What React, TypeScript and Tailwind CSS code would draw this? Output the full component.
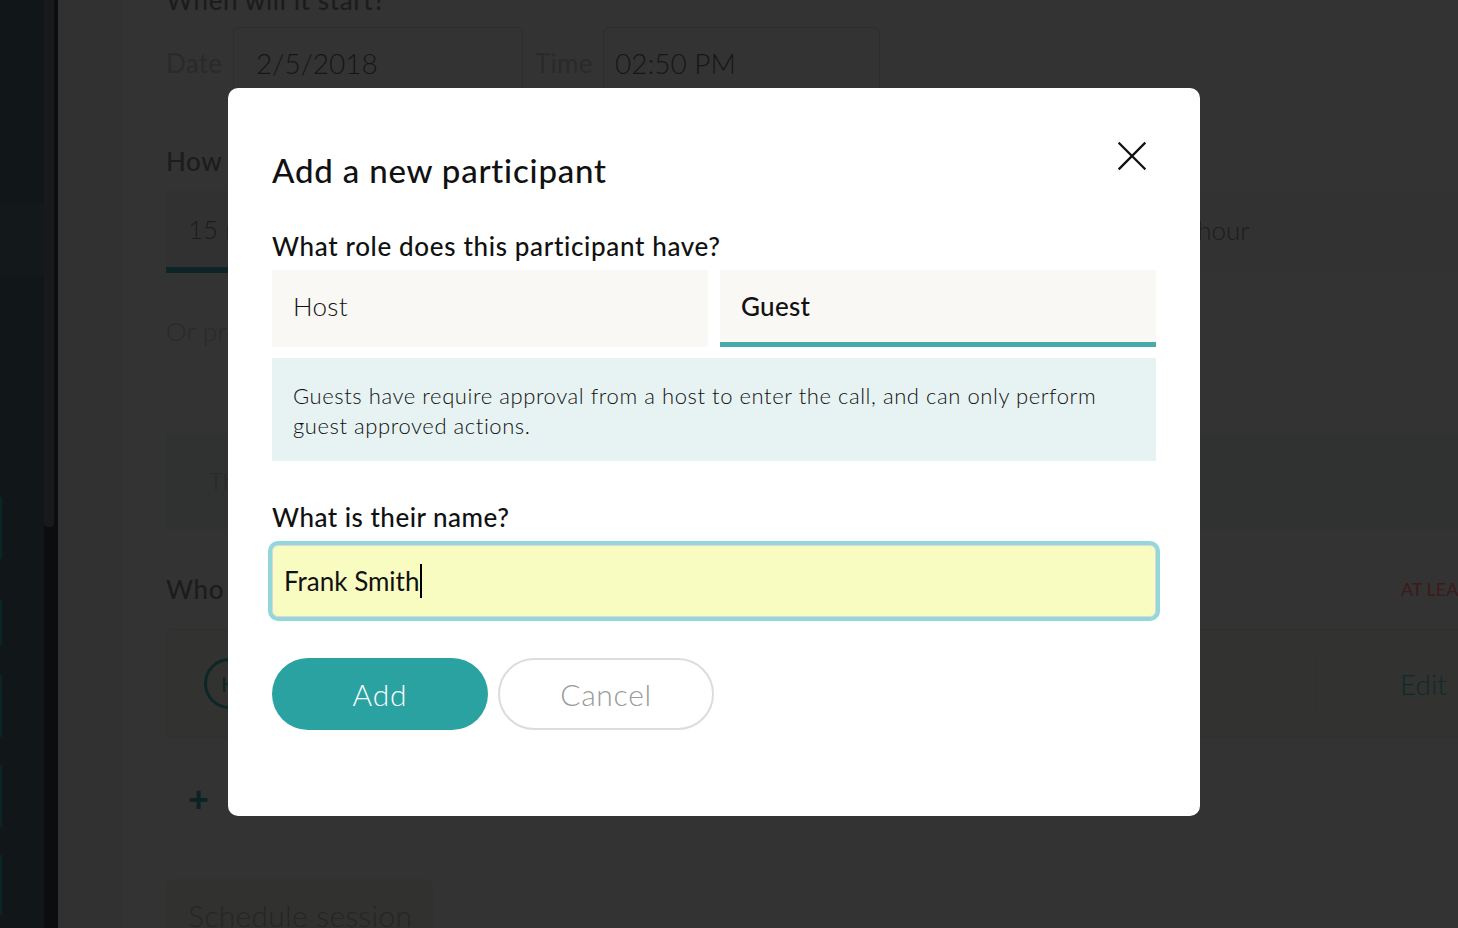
import React from "react";

function CloseIcon() {
  return (
    <svg width="30" height="30" viewBox="0 0 30 30" fill="none">
      <path d="M2.5 2.5 L27.5 27.5 M27.5 2.5 L2.5 27.5" stroke="#111" strokeWidth="2.3" strokeLinecap="square" />
    </svg>
  );
}

function Background() {
  return (
    <div className="flex h-[928px] w-[1458px] overflow-hidden bg-[#333333]">
      <div className="relative w-[44px] shrink-0 bg-[#111619]">
        <div className="mt-[203px] h-[72px] bg-[#13181b]" />
        <div className="absolute left-0 top-[497px] h-[62px] w-[2px] bg-[#0b2526]" />
        <div className="absolute left-0 top-[600px] h-[45px] w-[2px] bg-[#0b2526]" />
        <div className="absolute left-0 top-[675px] h-[62px] w-[2px] bg-[#0b2526]" />
        <div className="absolute left-0 top-[765px] h-[62px] w-[2px] bg-[#0b2526]" />
        <div className="absolute left-0 top-[855px] h-[60px] w-[2px] bg-[#0b2526]" />
      </div>
      <div className="w-[14px] shrink-0 bg-[#0c0d0e]">
        <div className="h-[527px] w-[10px] rounded-b-[4px] bg-[#18191a]" />
      </div>
      <div className="w-[64px] shrink-0 bg-[#313131]" />
      <div className="w-[1340px] shrink-0 pl-[44px] font-['Lato',sans-serif]">
        <div className="mt-[-16px] h-[32px] text-[26px] font-medium leading-[32px] tracking-[0.6px] text-[#1c1c1c]">When will it start?</div>
        <div className="mt-[11px] flex items-center">
          <span className="w-[67px] text-[26px] font-normal tracking-[0.3px] text-[#2a2a2a]">Date</span>
          <div className="flex h-[72px] w-[290px] items-center rounded-[6px] border border-[#2d2d2d] pl-[22px] text-[28px] font-light text-[#161616]">2/5/2018</div>
          <span className="ml-[12px] w-[68px] text-[26px] font-normal tracking-[0.3px] text-[#2a2a2a]">Time</span>
          <div className="flex h-[72px] w-[277px] items-center rounded-[6px] border border-[#2d2d2d] pl-[11px] text-[28px] font-light text-[#161616]">02:50 PM</div>
        </div>
        <div className="mt-[46px] h-[32px] text-[26px] font-medium leading-[32px] tracking-[0.6px] text-[#1c1c1c]">How long will it last?</div>
        <div className="mt-[14px] grid w-[1304px] grid-cols-4 gap-[12px]">
          {["15 minutes", "30 minutes", "45 minutes", "1 hour"].map((t, i) => (
            <div
              key={t}
              className={
                "flex h-[82px] items-center pl-[22px] text-[26px] font-light text-[#1c1c1c] " +
                (i === 0 ? "border-b-[6px] border-[#0d2526] bg-[#313131]" : "bg-[#323232] pb-[4px]")
              }
            >
              {t}
            </div>
          ))}
        </div>
        <div className="mt-[42px] text-[26px] font-light leading-[32px] tracking-[0.3px] text-[#2a2a2a]">Or propose a custom duration</div>
        <div className="mt-[86px] flex h-[96px] w-[1304px] items-center bg-[#303131] pl-[43px] text-[24px] font-light text-[#282828]">
          The session will be scheduled in your local time zone.
        </div>
        <div className="mt-[44px] flex w-[1292px] items-center justify-between">
          <span className="text-[26px] font-medium leading-[32px] tracking-[0.6px] text-[#1c1c1c]">Who will join?</span>
          <span className="w-[57px] overflow-hidden whitespace-nowrap text-[18px] text-[#3d1a1b]">AT LEAST ONE HOST</span>
        </div>
        <div className="mt-[24px] flex h-[109px] w-[1304px] items-center justify-between rounded-[6px] border border-[#2f2f2f] bg-[#323231] pl-[37px]">
          <div className="flex h-[51px] w-[51px] items-center justify-center rounded-full border-[3px] border-[#0d2627] text-[22px] text-[#0d2627]">H</div>
          <div className="mr-[-12px] flex h-[65px] w-[166px] items-center rounded-[6px] border border-[#303030] pl-[84px] text-[28px] font-light text-[#0f2a2b]">Edit</div>
        </div>
        <div className="mt-[42px] ml-[22px] text-[36px] font-black leading-[36px] text-[#0b2324]">+</div>
        <div className="mt-[63px] flex h-[72px] w-[267px] items-center rounded-[8px] bg-[#313130] pl-[22px] text-[30px] font-light tracking-[0.3px] text-[#262626]">
          Schedule session
        </div>
      </div>
    </div>
  );
}

export default function App() {
  return (
    <div className="relative h-[928px] w-[1458px] overflow-hidden">
      <Background />
      <div className="absolute left-[228px] top-[88px] h-[728px] w-[972px] rounded-[10px] bg-white px-[44px] pt-[62px] font-['Lato',sans-serif] text-[#111]">
        <div className="absolute right-[53px] top-[53px]">
          <CloseIcon />
        </div>
        <div className="h-[40px] text-[33px] font-medium leading-[40px] tracking-[0.8px] text-[#111]">Add a new participant</div>
        <div className="mt-[40px] h-[32px] text-[26px] font-medium leading-[32px] tracking-[0.65px]">What role does this participant have?</div>
        <div className="mt-[8px] flex gap-[12px]">
          <div className="flex h-[77px] w-[436px] items-center bg-[#f9f8f5] pb-[4px] pl-[21px] text-[26px] font-light tracking-[0.3px] text-[#111]">Host</div>
          <div className="flex h-[77px] w-[436px] items-center border-b-[5px] border-[#48aaa9] bg-[#f9f8f5] pl-[21px] text-[26px] font-medium tracking-[0.3px] text-[#111]">Guest</div>
        </div>
        <div className="mt-[11px] h-[103px] bg-[#e7f3f3] px-[21px] pt-[23px] text-[22px] font-light leading-[30px] tracking-[0.57px] text-[#111]">
          Guests have require approval from a host to enter the call, and can only perform
          <br />
          guest approved actions.
        </div>
        <div className="mt-[40px] h-[32px] text-[26px] font-medium leading-[32px] tracking-[0.5px]">What is their name?</div>
        <div className="mt-[12px] flex h-[72px] w-[884px] items-center rounded-[6px] border border-[#d9d9d9] bg-[#f9fcc1] pl-[11px] text-[26px] text-[#111] ring-4 ring-[#94d7db]">
          <span>Frank Smith</span>
          <span className="ml-[1px] h-[34px] w-[2px] bg-black" />
        </div>
        <div className="mt-[41px] flex gap-[10px]">
          <div className="flex h-[72px] w-[216px] items-center justify-center rounded-full bg-[#2aa2a2] text-[30px] font-light tracking-[0.8px] text-white">Add</div>
          <div className="flex h-[72px] w-[216px] items-center justify-center rounded-full border-2 border-[#dcdcdc] bg-white text-[30px] font-light tracking-[0.7px] text-[#9a9a9a]">Cancel</div>
        </div>
      </div>
    </div>
  );
}
